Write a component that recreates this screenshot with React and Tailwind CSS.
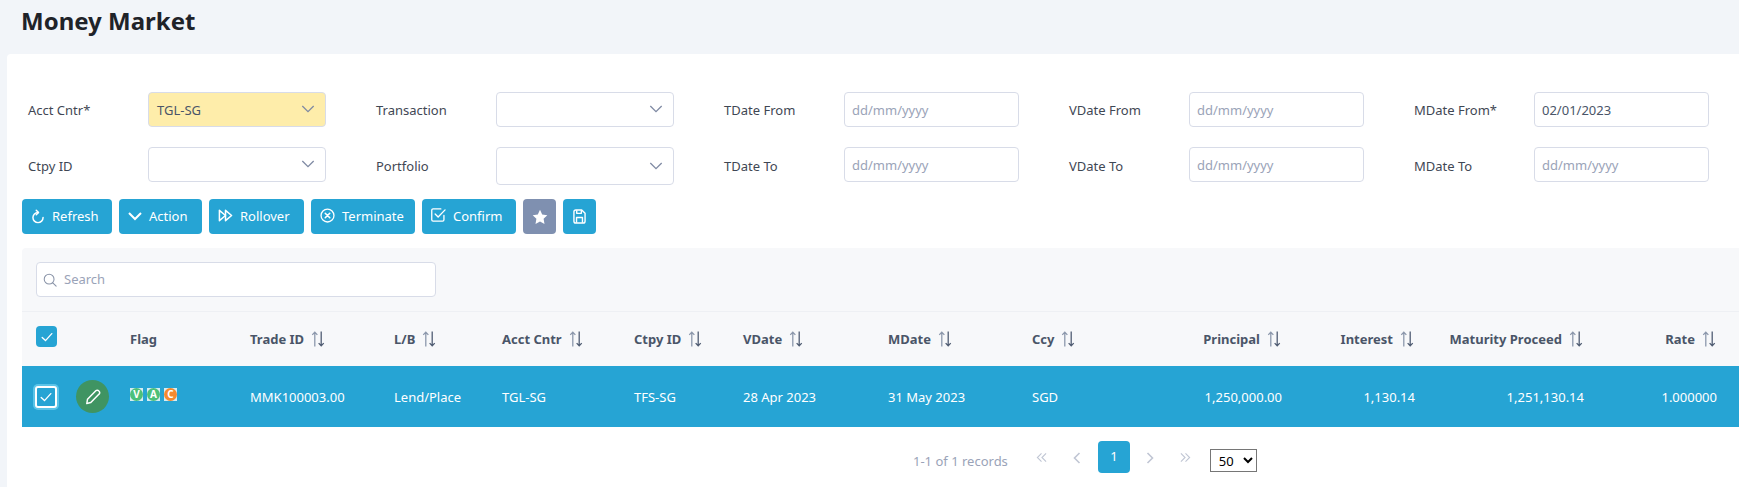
import React from 'react';

const Chevron = ({ className = '' }) => (
  <svg viewBox="0 0 16 16" className={className} fill="none" stroke="currentColor" strokeWidth="1.5">
    <path d="M1.5 4.5L8 11l6.5-6.5" />
  </svg>
);

const RefreshIcon = () => (
  <svg viewBox="0 0 16 16" className="w-[14px] h-[15px]" fill="none" stroke="currentColor" strokeWidth="1.7" strokeLinecap="round" strokeLinejoin="round">
    <path d="M8 3.4A5.8 5.8 0 1 0 13.8 9.2" />
    <path d="M6 .8l2.6 2.6L6 6" />
  </svg>
);

const ActionIcon = () => (
  <svg viewBox="0 0 14 14" className="w-[14px] h-[14px] -mt-[2px]" fill="none" stroke="currentColor" strokeWidth="2">
    <path d="M1 4l6 6 6-6" />
  </svg>
);

const RolloverIcon = () => (
  <svg viewBox="0 0 16 16" className="w-[15px] h-[15px] -mt-[2px]" fill="none" stroke="currentColor" strokeWidth="1.6" strokeLinejoin="round">
    <path d="M1.5 2.5v11L8 8z" />
    <path d="M8 2.5v11L14.5 8z" />
  </svg>
);

const TerminateIcon = () => (
  <svg viewBox="0 0 16 16" className="w-[15px] h-[15px] -mt-[2px]" fill="none" stroke="currentColor" strokeWidth="1.4" strokeLinecap="round">
    <circle cx="8" cy="8" r="6.9" />
    <path d="M5.6 5.6l4.8 4.8M10.4 5.6l-4.8 4.8" strokeWidth="1.7" />
  </svg>
);

const ConfirmIcon = () => (
  <svg viewBox="0 0 16 16" className="w-[15px] h-[15px] -mt-[2px]" fill="none" stroke="currentColor" strokeWidth="1.4" strokeLinecap="round">
    <path d="M13.8 8v4.6a1.4 1.4 0 0 1-1.4 1.4H2.2a1.4 1.4 0 0 1-1.4-1.4V2.4A1.4 1.4 0 0 1 2.2 1h8.3" />
    <path d="M4.4 6.4l3.2 3.2L15 2" />
  </svg>
);

const StarIcon = () => (
  <svg viewBox="0 0 16 16" className="w-[16px] h-[16px]" fill="currentColor">
    <path d="M8 .8l2.2 4.7 5.1.7-3.7 3.6.9 5.1L8 12.5l-4.5 2.4.9-5.1L.7 6.2l5.1-.7z" />
  </svg>
);

const SaveIcon = () => (
  <svg viewBox="0 0 14 16" className="w-[13px] h-[15px]" fill="none" stroke="currentColor" strokeWidth="1.5" strokeLinejoin="round">
    <path d="M1 3a2 2 0 0 1 2-2h6.4L13 4.6V13a2 2 0 0 1-2 2H3a2 2 0 0 1-2-2z" />
    <path d="M4 1.4v3.2h5V1.4M3.8 14.6V9h6.4v5.6" />
  </svg>
);

const SearchIcon = () => (
  <svg viewBox="0 0 16 16" className="w-[14px] h-[14px] text-[#8a94a8]" fill="none" stroke="currentColor" strokeWidth="1.2" strokeLinecap="round">
    <circle cx="7" cy="7" r="5.6" />
    <path d="M11.2 11.2L15 15" />
  </svg>
);

const CheckMark = ({ className = '' }) => (
  <svg viewBox="0 0 16 16" className={className} fill="none" stroke="white" strokeWidth="1.5" strokeLinecap="round">
    <path d="M2.5 8.5l3.8 3.6 7.2-8" />
  </svg>
);

const SortIcon = () => (
  <svg viewBox="0 0 14 15" className="w-[16px] h-[16px] ml-[6px] -mt-[2px] shrink-0" fill="none" strokeWidth="1.2">
    <path d="M4 14.5V1M1.6 3.6L4 1.2l2.4 2.4" stroke="#8c98ac" />
    <path d="M10 .5V14M7.6 11.4l2.4 2.4 2.4-2.4" stroke="#4f5c72" />
  </svg>
);

const PencilIcon = () => (
  <svg viewBox="0 0 16 16" className="w-[16px] h-[16px]" fill="none" stroke="white" strokeWidth="1.5" strokeLinejoin="round">
    <path d="M10.8 1.8a2 2 0 0 1 2.9 0l.4.4a2 2 0 0 1 0 2.9l-8.3 8.5-4 .9.7-4.2z" />
  </svg>
);

const DoubleChevron = ({ dir }) => (
  <svg viewBox="0 0 12 12" className="w-[11px] h-[11px] text-[#c0c6d4]" fill="none" stroke="currentColor" strokeWidth="1.2">
    {dir === 'left' ? <path d="M6 1.5L1.5 6 6 10.5M11 1.5L6.5 6l4.5 4.5" /> : <path d="M1 1.5L5.5 6 1 10.5M6 1.5L10.5 6 6 10.5" />}
  </svg>
);

const SingleChevron = ({ dir }) => (
  <svg viewBox="0 0 12 12" className="w-[12px] h-[12px] text-[#c0c6d4]" fill="none" stroke="currentColor" strokeWidth="1.6">
    {dir === 'left' ? <path d="M8.5 1L3.5 6l5 5" /> : <path d="M3.5 1l5 5-5 5" />}
  </svg>
);

const SelectBox = ({ value, highlight, height = 'h-[35px]' }) => (
  <div className={`w-[178px] ${height} rounded-[4px] border border-[#d8dce8] flex items-center justify-between pl-[8px] pr-[10px] text-[13px] text-[#4a5568] ${highlight ? 'bg-[#feedaa]' : 'bg-white'}`}>
    <span className="pt-[2px]">{value}</span>
    <Chevron className="w-[14px] h-[14px] -mt-[1px] text-[#7f8aa3]" />
  </div>
);

const DateBox = ({ value, width }) => (
  <div className={`${width} h-[35px] rounded-[4px] border border-[#d8dce8] bg-white flex items-center pl-[7px] pt-[2px] text-[13px] ${value ? 'text-[#4a5568]' : 'text-[#9aa3b8]'}`}>
    {value || 'dd/mm/yyyy'}
  </div>
);

const Field = ({ label, children, labelPad = 'pt-[3px]' }) => (
  <div className="flex items-start">
    <span className={`w-[120px] h-[35px] flex items-center text-[13px] text-[#3f4754] ${labelPad}`}>{label}</span>
    {children}
  </div>
);

const ToolButton = ({ icon, label, className }) => (
  <button className={`h-[35px] rounded-[4px] bg-[#26a4d4] text-white text-[13px] flex items-center gap-[7px] ${label ? 'pl-[9px]' : 'justify-center'} ${className}`}>
    {icon}
    {label && <span>{label}</span>}
  </button>
);

const FlagBadge = ({ letter, color }) => (
  <span className="w-[13px] h-[13px] bg-[#d5ecf3] flex items-center justify-center">
    <span className={`w-[13px] h-[13px] rounded-full flex items-center justify-center text-white text-[10px] font-bold leading-none ${color}`}>{letter}</span>
  </span>
);

const columns = [
  { key: 'trade', label: 'Trade ID', width: 'w-[144px]', value: 'MMK100003.00' },
  { key: 'lb', label: 'L/B', width: 'w-[108px]', value: 'Lend/Place' },
  { key: 'acct', label: 'Acct Cntr', width: 'w-[132px]', value: 'TGL-SG' },
  { key: 'ctpy', label: 'Ctpy ID', width: 'w-[109px]', value: 'TFS-SG' },
  { key: 'vdate', label: 'VDate', width: 'w-[145px]', value: '28 Apr 2023' },
  { key: 'mdate', label: 'MDate', width: 'w-[144px]', value: '31 May 2023' },
  { key: 'ccy', label: 'Ccy', width: 'w-[145px]', value: 'SGD' },
  { key: 'principal', label: 'Principal', width: 'w-[133px]', value: '1,250,000.00', right: true },
  { key: 'interest', label: 'Interest', width: 'w-[133px]', value: '1,130.14', right: true },
  { key: 'maturity', label: 'Maturity Proceed', width: 'w-[169px]', value: '1,251,130.14', right: true },
  { key: 'rate', label: 'Rate', width: 'w-[133px]', value: '1.000000', right: true },
];

export default function App() {
  return (
    <div className="h-[487px] overflow-hidden bg-[#f2f5f9] font-['Noto_Sans',sans-serif]">
      <h1 className="h-[54px] pl-[21px] pt-[4px] text-[24px] leading-[34px] font-bold text-[#1f2329]">Money Market</h1>

      <div className="ml-[7px] h-[433px] rounded-tl-[4px] bg-white pt-[38px] pl-[15px]">
        {/* Filter form */}
        <div className="pl-[6px] h-[90px] grid grid-cols-[348px_348px_345px_345px_295px] grid-rows-[35px_35px] gap-y-[20px]">
          <Field label="Acct Cntr*"><SelectBox value="TGL-SG" highlight /></Field>
          <Field label="Transaction"><SelectBox /></Field>
          <Field label="TDate From"><DateBox width="w-[175px]" /></Field>
          <Field label="VDate From"><DateBox width="w-[175px]" /></Field>
          <Field label="MDate From*"><DateBox width="w-[175px]" value="02/01/2023" /></Field>
          <Field label="Ctpy ID" labelPad="pt-[5px]"><SelectBox /></Field>
          <Field label="Portfolio" labelPad="pt-[5px]"><SelectBox height="h-[38px]" /></Field>
          <Field label="TDate To" labelPad="pt-[5px]"><DateBox width="w-[175px]" /></Field>
          <Field label="VDate To" labelPad="pt-[5px]"><DateBox width="w-[175px]" /></Field>
          <Field label="MDate To" labelPad="pt-[5px]"><DateBox width="w-[175px]" /></Field>
        </div>

        {/* Toolbar */}
        <div className="mt-[17px] flex gap-[7px]">
          <ToolButton className="w-[90px]" icon={<RefreshIcon />} label="Refresh" />
          <ToolButton className="w-[83px]" icon={<ActionIcon />} label="Action" />
          <ToolButton className="w-[95px]" icon={<RolloverIcon />} label="Rollover" />
          <ToolButton className="w-[104px]" icon={<TerminateIcon />} label="Terminate" />
          <ToolButton className="w-[94px]" icon={<ConfirmIcon />} label="Confirm" />
          <ToolButton className="w-[33px] !bg-[#7f90b0]" icon={<StarIcon />} />
          <ToolButton className="w-[33px]" icon={<SaveIcon />} />
        </div>

        {/* Table panel */}
        <div className="mt-[14px] bg-[#f7f8fa] rounded-tl-[4px] overflow-hidden">
          <div className="h-[64px] pl-[14px] pt-[14px] border-b border-[#eef0f4]">
            <div className="w-[400px] h-[35px] rounded-[4px] border border-[#d8dce8] bg-white flex items-center gap-[7px] pl-[6px] text-[13px] text-[#9aa3b8]">
              <SearchIcon />
              <span>Search</span>
            </div>
          </div>

          <table className="table-fixed w-[1717px] border-collapse">
            <colgroup>
              <col className="w-[48px]" />
              <col className="w-[46px]" />
              <col className="w-[120px]" />
              {columns.map((c) => (
                <col key={c.key} className={c.width} />
              ))}
              <col className="w-[8px]" />
            </colgroup>
            <thead>
              <tr className="h-[54px] text-[13px] font-bold text-[#4a5568]">
                <th className="pl-[14px] text-left">
                  <span className="w-[21px] h-[21px] -mt-[5px] rounded-[4px] bg-[#26a4d4] flex items-center justify-center">
                    <CheckMark className="w-[14px] h-[14px]" />
                  </span>
                </th>
                <th></th>
                <th className="pl-[14px] pt-[2px] text-left">Flag</th>
                {columns.map((c) => (
                  <th key={c.key} className="px-[14px] pt-[2px]">
                    <span className={`flex items-center ${c.right ? 'justify-end' : ''}`}>
                      {c.label}
                      <SortIcon />
                    </span>
                  </th>
                ))}
                <th></th>
              </tr>
            </thead>
            <tbody>
              <tr className="h-[61px] bg-[#26a4d4] text-white text-[13px]">
                <td className="pl-[11px]">
                  <span className="w-[26px] h-[26px] rounded-[5px] bg-[#5bc4e8] flex items-center justify-center">
                    <span className="w-[22px] h-[22px] rounded-[3px] border-2 border-white bg-[#26a4d4] flex items-center justify-center">
                      <CheckMark className="w-[14px] h-[14px]" />
                    </span>
                  </span>
                </td>
                <td className="pl-[6px]">
                  <span className="w-[33px] h-[33px] rounded-full bg-[#3f9462] flex items-center justify-center">
                    <PencilIcon />
                  </span>
                </td>
                <td className="pl-[14px]">
                  <span className="flex gap-[4px] -mt-[5px]">
                    <FlagBadge letter="V" color="bg-[#4cc07a]" />
                    <FlagBadge letter="A" color="bg-[#4cc07a]" />
                    <FlagBadge letter="C" color="bg-[#f58a2e]" />
                  </span>
                </td>
                {columns.map((c) => (
                  <td key={c.key} className={`px-[14px] pt-[2px] ${c.right ? 'text-right' : ''}`}>{c.value}</td>
                ))}
                <td></td>
              </tr>
            </tbody>
          </table>
        </div>

        {/* Pagination */}
        <div className="h-[60px] bg-white pl-[891px] flex items-start text-[13px] text-[#9aa3b8]">
          <span className="mt-[24px] leading-[20px]">1-1 of 1 records</span>
          <span className="ml-[28px] mt-[25px]"><DoubleChevron dir="left" /></span>
          <span className="ml-[24px] mt-[25px]"><SingleChevron dir="left" /></span>
          <span className="ml-[15px] mt-[14px] w-[32px] h-[32px] rounded-[4px] bg-[#26a4d4] text-white flex items-center justify-center">1</span>
          <span className="ml-[14px] mt-[25px]"><SingleChevron dir="right" /></span>
          <span className="ml-[24px] mt-[25px]"><DoubleChevron dir="right" /></span>
          <select className="ml-[19px] mt-[22px] w-[47px] h-[23px] border border-[#767676] bg-white text-[13px] text-black pl-[4px] appearance-auto" defaultValue="50">
            <option>50</option>
          </select>
        </div>
      </div>
    </div>
  );
}
